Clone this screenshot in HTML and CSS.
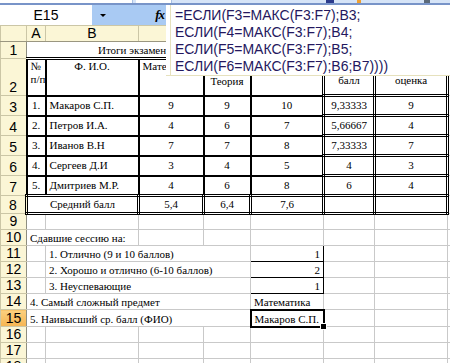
FILE: index.html
```html
<html>
<head>
  <title>Итоги экзаменационной сессии</title>
  <meta charset="utf-8">
  <link rel="stylesheet" href="styles.css">
</head>
<body>
  <div class="app">
    <div class="toolbar">
      <div class="tb-box wide"></div>
      <div class="tb-box"></div>
      <div class="tb-fill"></div>
      <div class="tb-icon navy"></div>
      <div class="tb-icon orange"></div>
      <div class="tb-icon dark"></div>
    </div>
    <div class="formula-bar">
      <div class="name-box">E15</div>
      <div class="fx-area"><span class="arrow"></span><span class="fx">fx</span></div>
      <div class="formula">
        =ЕСЛИ(F3=МАКС(F3:F7);B3;<br>
        ЕСЛИ(F4=МАКС(F3:F7);B4;<br>
        ЕСЛИ(F5=МАКС(F3:F7);B5;<br>
        ЕСЛИ(F6=МАКС(F3:F7);B6;B7))))
      </div>
    </div>
    <table class="sheet">
      <colgroup>
        <col class="w-rh"><col class="w-a"><col class="w-b"><col class="w-c"><col class="w-d">
        <col class="w-e"><col class="w-f"><col class="w-g"><col class="w-h">
      </colgroup>
      <tr class="colhead">
        <th class="corner"></th><th>A</th><th>B</th><th>C</th><th>D</th><th class="sel">E</th><th>F</th><th>G</th><th>H</th>
      </tr>
      <tr class="r1">
        <th>1</th>
        <td class="title" colspan="7">Итоги экзаменационной сессии</td>
        <td></td>
      </tr>
      <tr class="r2">
        <th>2</th>
        <td class="thick head">№<br>п/п</td>
        <td class="thick head center">Ф. И.О.</td>
        <td class="thick head">Математика</td>
        <td class="thick head low center">Теория</td>
        <td class="thick head"></td>
        <td class="dbl head low center">Средний<br>балл</td>
        <td class="dbl head low center">Итоговая<br>оценка</td>
        <td></td>
      </tr>
      <tr class="rd">
        <th>3</th>
        <td class="thick center">1.</td><td class="thick">Макаров С.П.</td>
        <td class="thick center">9</td><td class="thick center">9</td><td class="thick center">10</td>
        <td class="dbl center">9,33333</td><td class="dbl center">9</td><td></td>
      </tr>
      <tr class="rd">
        <th>4</th>
        <td class="thick center">2.</td><td class="thick">Петров И.А.</td>
        <td class="thick center">4</td><td class="thick center">6</td><td class="thick center">7</td>
        <td class="dbl center">5,66667</td><td class="dbl center">4</td><td></td>
      </tr>
      <tr class="rd">
        <th>5</th>
        <td class="thick center">3.</td><td class="thick">Иванов В.Н</td>
        <td class="thick center">7</td><td class="thick center">7</td><td class="thick center">8</td>
        <td class="dbl center">7,33333</td><td class="dbl center">7</td><td></td>
      </tr>
      <tr class="rd">
        <th>6</th>
        <td class="thick center">4.</td><td class="thick">Сергеев Д.И</td>
        <td class="thick center">3</td><td class="thick center">4</td><td class="thick center">5</td>
        <td class="dbl center">4</td><td class="dbl center">3</td><td></td>
      </tr>
      <tr class="rd">
        <th>7</th>
        <td class="thick center">5.</td><td class="thick">Дмитриев М.Р.</td>
        <td class="thick center">4</td><td class="thick center">6</td><td class="thick center">8</td>
        <td class="dbl center">6</td><td class="dbl center">4</td><td></td>
      </tr>
      <tr class="r8">
        <th>8</th>
        <td class="dbl center" colspan="2">Средний балл</td>
        <td class="dbl center">5,4</td><td class="dbl center">6,4</td><td class="dbl center">7,6</td>
        <td class="dbl"></td><td class="dbl"></td><td></td>
      </tr>
      <tr class="rs">
        <th>9</th><td></td><td></td><td></td><td></td><td></td><td></td><td></td><td></td>
      </tr>
      <tr class="rs">
        <th>10</th><td colspan="2">Сдавшие сессию на:</td><td></td><td></td><td></td><td></td><td></td><td></td>
      </tr>
      <tr class="rs">
        <th>11</th><td></td><td colspan="3">1. Отлично (9 и 10 баллов)</td>
        <td class="box right">1</td><td></td><td></td><td></td>
      </tr>
      <tr class="rs">
        <th>12</th><td></td><td colspan="3">2. Хорошо и отлично (6-10 баллов)</td>
        <td class="box right">2</td><td></td><td></td><td></td>
      </tr>
      <tr class="rs">
        <th>13</th><td></td><td colspan="3">3. Неуспевающие</td>
        <td class="box right">1</td><td></td><td></td><td></td>
      </tr>
      <tr class="rs">
        <th>14</th><td colspan="4">4. Самый сложный предмет</td>
        <td>Математика</td><td></td><td></td><td></td>
      </tr>
      <tr class="r15">
        <th class="sel">15</th><td colspan="4">5. Наивысший ср. балл (ФИО)</td>
        <td class="active">Макаров С.П.<span class="handle"></span></td><td></td><td></td><td></td>
      </tr>
      <tr class="rs">
        <th>16</th><td></td><td></td><td></td><td></td><td></td><td></td><td></td><td></td>
      </tr>
      <tr class="rs">
        <th>17</th><td></td><td></td><td></td><td></td><td></td><td></td><td></td><td></td>
      </tr>
      <tr class="rs">
        <th>18</th><td></td><td></td><td></td><td></td><td></td><td></td><td></td><td></td>
      </tr>
    </table>
  </div>
</body>
</html>
```

FILE: styles.css
```css
body {
  margin: 0;
  background: #fff;
}
.app {
  width: 450px;
  height: 363px;
  overflow: hidden;
  position: relative;
  font-family: "Liberation Sans", Arial, sans-serif;
}

/* toolbar tail */
.toolbar {
  height: 3px;
  background: #d6e4f7;
  border-bottom: 2px solid #7894c8;
  display: flex;
  gap: 3px;
}
.tb-box {
  width: 36px;
  background: #fff;
  border-right: 1px solid #a9c0e4;
}
.tb-box.wide { width: 134px; }
.tb-fill { width: 150px; }
.tb-icon { width: 8px; margin-right: 20px; }
.tb-icon.navy { background: #2b3b8c; }
.tb-icon.orange { background: #f0a030; width: 4px; }
.tb-icon.dark { background: #5c6a7a; width: 6px; margin-left: 40px; }

/* formula bar */
.formula-bar {
  height: 20px;
  display: flex;
  position: relative;
}
.name-box {
  width: 92px;
  text-align: center;
  font-size: 14px;
  line-height: 21px;
  color: #000;
}
.fx-area {
  width: 78px;
  box-sizing: border-box;
  background: #a9caf3;
  display: flex;
  align-items: center;
  justify-content: space-between;
  padding: 0 6px 0 8px;
}
.arrow {
  width: 0;
  height: 0;
  border-left: 3px solid transparent;
  border-right: 3px solid transparent;
  border-top: 3px solid #000;
}
.fx {
  font: italic bold 13px "Liberation Serif", serif;
  letter-spacing: -1px;
}
.formula {
  position: absolute;
  left: 166px;
  top: 0;
  right: 0;
  height: 68px;
  box-sizing: content-box;
  padding: 2px 0 0 9px;
  background: linear-gradient(to right, #fff 4px, #e6e1bd 4px, #e6e1bd 5px, #fff 5px);
  border-bottom: 1px solid #e6e1bd;
  font-size: 14px;
  line-height: 16.9px;
  color: #24185e;
  white-space: nowrap;
  z-index: 3;
}

/* sheet */
.sheet {
  border-collapse: collapse;
  table-layout: fixed;
  width: 507px;
}
.w-rh { width: 26px; }
.w-a { width: 19px; }
.w-b { width: 93px; }
.w-c { width: 65px; }
.w-d { width: 47px; }
.w-e { width: 73px; }
.w-f { width: 51px; }
.w-g { width: 73px; }
.w-h { width: 60px; }

.sheet th {
  background: #fbf6d6;
  border: 1px solid #cbc6a6;
  border-right-color: #8e8e80;
  font-weight: normal;
  font-size: 14px;
  color: #000;
  padding: 0 0 1px;
  text-align: center;
  line-height: 14px;
  vertical-align: bottom;
}
.sheet th.sel {
  background: linear-gradient(#fbd07f, #f6b552);
}
.colhead th {
  height: 16px;
  border-right-color: #cbc6a6;
  border-bottom-color: #9a9680;
}
.sheet td {
  border: 1px solid #c9c9c9;
  padding: 0 3px;
  font: 11px/13px "Liberation Serif", "Times New Roman", serif;
  color: #000;
  white-space: nowrap;
  overflow: visible;
  vertical-align: bottom;
}
.r1 { height: 17px; }
.r2 { height: 37px; }
.rd { height: 20px; }
.r8 { height: 18px; }
.rs { height: 16px; }
.r15 { height: 17px; }

.r1 td {
  border-bottom: 3px double #000;
}
.r1 td.title {
  padding-left: 71px;
  border-left-color: #fff;
}
.thick {
  border: 2px solid #000 !important;
}
.dbl {
  border: 3px double #000 !important;
}
.rd td, .r8 td {
  vertical-align: middle;
}
.head {
  vertical-align: top !important;
  padding-top: 2px;
}
.head.low {
  vertical-align: bottom !important;
  padding-bottom: 7px;
}
.center { text-align: center; }
.right { text-align: right; }
.box {
  border: 1px solid #000 !important;
}
.active {
  position: relative;
  border: 2px solid #000 !important;
}
.handle {
  position: absolute;
  right: -4px;
  bottom: -4px;
  width: 5px;
  height: 5px;
  background: #000;
  border: 1px solid #fff;
}
```
